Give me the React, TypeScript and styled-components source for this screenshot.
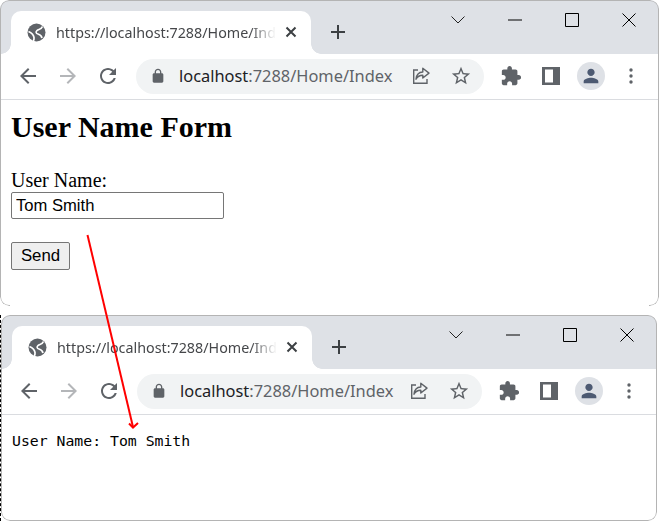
import React from "react";
import styled, { createGlobalStyle } from "styled-components";

const Global = createGlobalStyle`
  html, body { margin: 0; padding: 0; background: #fff; }
  * { box-sizing: border-box; }
`;

const Page = styled.div`
  position: relative;
  width: 659px;
  height: 521px;
  overflow: hidden;
  display: flex;
  flex-direction: column;
  gap: 9px;
  background: #fff;
`;

const LowerRow = styled.div`
  flex: 1;
  width: 657px;
  border-left: 1px dashed #000;
  display: flex;
`;

const Window = styled.section<{ $height: number; $closed?: boolean }>`
  position: relative;
  width: 100%;
  height: ${(p) => p.$height}px;
  overflow: hidden;
  border-radius: 9px;
  display: flex;
  flex-direction: column;
  background: #fff;
  &::after {
    content: "";
    position: absolute;
    inset: 0;
    border: 1px solid #b4b4b4;
    border-radius: 9px;
    pointer-events: none;
    ${(p) =>
      p.$closed
        ? ""
        : `
      -webkit-mask:
        linear-gradient(#000 0 0) top / 100% calc(100% - 1px) no-repeat,
        linear-gradient(to right, #000 10px, transparent 10px, transparent calc(100% - 10px), #000 calc(100% - 10px)) bottom / 100% 1px no-repeat;
      mask:
        linear-gradient(#000 0 0) top / 100% calc(100% - 1px) no-repeat,
        linear-gradient(to right, #000 10px, transparent 10px, transparent calc(100% - 10px), #000 calc(100% - 10px)) bottom / 100% 1px no-repeat;
    `}
  }
`;

const TabStrip = styled.div`
  height: 54px;
  flex: none;
  display: flex;
  align-items: flex-start;
  background: #dee1e6;
`;

const Tab = styled.div`
  position: relative;
  width: 300px;
  height: 43px;
  margin: 11px 0 0 11px;
  padding: 0 14px 1px 16px;
  display: flex;
  align-items: center;
  background: #fff;
  border-radius: 10px 10px 0 0;
  &::before,
  &::after {
    content: "";
    position: absolute;
    bottom: 0;
    width: 10px;
    height: 10px;
  }
  &::before {
    left: -10px;
    background: radial-gradient(circle at 0 0, transparent 9.5px, #fff 10px);
  }
  &::after {
    right: -10px;
    background: radial-gradient(circle at 100% 0, transparent 9.5px, #fff 10px);
  }
`;

const TabTitle = styled.span`
  flex: 1;
  min-width: 0;
  margin: 1px 9px 0 10px;
  overflow: hidden;
  white-space: nowrap;
  font: 14.3px/20px "Noto Sans", "Open Sans", sans-serif;
  color: #45474a;
  -webkit-mask-image: linear-gradient(to right, #000 88%, transparent 100%);
  mask-image: linear-gradient(to right, #000 88%, transparent 100%);
`;

const PlusSlot = styled.div`
  width: 20px;
  height: 20px;
  margin: 22px 0 0 17px;
  display: flex;
`;

const Controls = styled.div`
  margin-left: auto;
  padding: 10px 2px 0 0;
  display: flex;
  align-items: center;
`;

const ControlSlot = styled.div<{ $width: number }>`
  width: ${(p) => p.$width}px;
  height: 20px;
  display: flex;
  align-items: center;
  justify-content: center;
`;

const Toolbar = styled.div`
  height: 46px;
  flex: none;
  padding: 5px 8px 6px;
  display: flex;
  align-items: center;
  background: #fff;
  border-bottom: 1px solid #dadce0;
`;

const IconSlot = styled.div`
  width: 40px;
  height: 35px;
  flex: none;
  display: flex;
  align-items: center;
  justify-content: center;
`;

const Omnibox = styled.div`
  flex: 1;
  min-width: 0;
  height: 35px;
  margin: 0 7px 0 8px;
  padding: 0 4px 0 14px;
  display: flex;
  align-items: center;
  background: #f1f3f4;
  border-radius: 18px;
`;

const OmniIcon = styled.div<{ $width: number }>`
  width: ${(p) => p.$width}px;
  height: 35px;
  flex: none;
  display: flex;
  align-items: center;
  justify-content: center;
`;

const Url = styled.div`
  flex: 1;
  margin-left: 13px;
  white-space: nowrap;
  font: 16.4px/24px "Noto Sans", "Open Sans", sans-serif;
  color: #5f6368;
`;

const Host = styled.span`
  color: #202124;
`;

const Avatar = styled.div`
  width: 28px;
  height: 28px;
  border-radius: 50%;
  background: #dee1e6;
  display: flex;
  align-items: center;
  justify-content: center;
`;

const FormBody = styled.main`
  flex: 1;
  padding: 9px 11px 0;
  font: 20px/23px "Liberation Serif", serif;
  color: #000;
`;

const Title = styled.h1`
  margin: 0 0 25px;
  font: bold 30px/35px "Liberation Serif", serif;
`;

const FieldLabel = styled.label`
  display: block;
`;

const TextInput = styled.input`
  display: block;
  width: 213px;
  height: 27px;
  margin: 0 0 23px;
  padding: 0 4px;
  border: 1px solid #767676;
  border-radius: 2px;
  background: #fff;
  color: #000;
  font: 16.6px "Liberation Sans", Arial, sans-serif;
  outline: none;
`;

const SendButton = styled.button`
  display: block;
  width: 59px;
  height: 28px;
  padding: 0;
  border: 1px solid #767676;
  border-radius: 2px;
  background: #efefef;
  color: #000;
  font: 16.8px "Liberation Sans", Arial, sans-serif;
`;

const ResultBody = styled.main`
  flex: 1;
  padding: 16px 11px 0;
  font: 14.8px/19px "DejaVu Sans Mono", monospace;
  color: #000;
  white-space: pre;
`;

const ArrowOverlay = styled.svg`
  position: absolute;
  inset: 0;
  pointer-events: none;
`;

const gray = "#5f6368";

const Icon = ({ size, d, fill = gray }: { size: number; d: string; fill?: string }) => (
  <svg width={size} height={size} viewBox="0 0 24 24" fill={fill} aria-hidden="true">
    <path d={d} />
  </svg>
);

const paths = {
  back: "M20 11H7.830l5.590-5.590L12 4l-8 8 8 8 1.410-1.410L7.830 13H20v-2z",
  forward: "M4 11h12.170l-5.590-5.590L12 4l8 8-8 8-1.410-1.410L16.170 13H4v-2z",
  reload:
    "M17.650 6.350C16.200 4.900 14.210 4 12 4c-4.420 0-7.990 3.580-7.990 8s3.570 8 7.990 8c3.730 0 6.840-2.550 7.730-6h-2.080c-.82 2.330-3.040 4-5.650 4-3.310 0-6-2.690-6-6s2.690-6 6-6c1.660 0 3.140.69 4.220 1.780L13 11h7V4l-2.350 2.350z",
  lock:
    "M18 8h-1V6c0-2.760-2.240-5-5-5S7 3.240 7 6v2H6c-1.100 0-2 .9-2 2v10c0 1.100.9 2 2 2h12c1.100 0 2-.9 2-2V10c0-1.100-.9-2-2-2zM9 6c0-1.660 1.340-3 3-3s3 1.340 3 3v2H9V6z",
  star:
    "M22 9.240l-7.190-.62L12 2 9.190 8.630 2 9.240l5.460 4.730L5.820 21 12 17.270 18.180 21l-1.630-7.030L22 9.240zM12 15.400l-3.760 2.270 1-4.280-3.320-2.880 4.380-.38L12 6.100l1.710 4.040 4.380.38-3.320 2.880 1 4.280L12 15.400z",
  puzzle:
    "M20.500 11H19V7c0-1.100-.9-2-2-2h-4V3.500C13 2.120 11.880 1 10.500 1S8 2.120 8 3.500V5H4c-1.100 0-1.990.9-1.990 2v3.800H3.500c1.490 0 2.700 1.210 2.700 2.700s-1.210 2.700-2.700 2.700H2V20c0 1.100.9 2 2 2h3.800v-1.500c0-1.490 1.210-2.700 2.700-2.700 1.490 0 2.700 1.210 2.700 2.700V22H17c1.100 0 2-.9 2-2v-4h1.500c1.380 0 2.500-1.120 2.500-2.500S21.880 11 20.500 11z",
  person:
    "M12 12c2.210 0 4-1.790 4-4s-1.790-4-4-4-4 1.790-4 4 1.790 4 4 4zm0 2c-2.670 0-8 1.340-8 4v2h16v-2c0-2.660-5.330-4-8-4z",
};

const GlobeIcon = () => (
  <svg width="19" height="19" viewBox="0 0 19 19" aria-hidden="true">
    <circle cx="9.500" cy="9.500" r="9" fill={gray} />
    <path d="M15.500 3.500C14 7 11.500 6 10 7.500S9 10.500 11 11s3.500 1.500 4 4" fill="none" stroke="#fff" strokeWidth="1.700" />
    <path d="M1.500 8.500C4 9.500 6.500 11.500 7 14.500c.2 1.500-.2 2.600-.6 3.500" fill="none" stroke="#fff" strokeWidth="1.700" />
  </svg>
);

const ShareIcon = () => (
  <svg width="20" height="20" viewBox="0 0 20 20" fill="none" stroke={gray} strokeWidth="1.400" aria-hidden="true">
    <path d="M7 4H2.700v13.300h13.300V13" />
    <path d="M11.800 2.200l6.200 4.900-6.200 4.900V9.200c-3.400 0-5.400 1.300-6.800 4 .4-4.200 2.800-7 6.800-7.200V2.200z" strokeLinejoin="round" />
  </svg>
);

const SidePanelIcon = () => (
  <svg width="18" height="18" viewBox="0 0 18 18" aria-hidden="true">
    <path fillRule="evenodd" fill={gray} d="M0 0h18v18H0zM3 2.500v13h8v-13z" />
  </svg>
);

const DotsIcon = () => (
  <svg width="4" height="16" viewBox="0 0 4 16" fill={gray} aria-hidden="true">
    <circle cx="2" cy="2" r="1.700" />
    <circle cx="2" cy="8" r="1.700" />
    <circle cx="2" cy="14" r="1.700" />
  </svg>
);

const CloseTabIcon = () => (
  <svg width="12" height="12" viewBox="0 0 12 12" stroke="#3c4043" strokeWidth="2" aria-hidden="true">
    <path d="M1.500 1.500l9 9M10.500 1.500l-9 9" />
  </svg>
);

const PlusIcon = () => (
  <svg width="20" height="20" viewBox="0 0 20 20" stroke="#3c4043" strokeWidth="2" aria-hidden="true">
    <path d="M10 3v14M3 10h14" />
  </svg>
);

const WinChevron = () => (
  <svg width="14" height="8" viewBox="0 0 14 8" fill="none" stroke="#222" strokeWidth="1" aria-hidden="true">
    <path d="M.5.5L7 7 13.500.5" />
  </svg>
);
const WinMin = () => (
  <svg width="14" height="2" viewBox="0 0 14 2" stroke="#000" strokeWidth="1" aria-hidden="true">
    <path d="M0 1h14" />
  </svg>
);
const WinMax = () => (
  <svg width="14" height="14" viewBox="0 0 14 14" fill="none" stroke="#000" strokeWidth="1" aria-hidden="true">
    <path d="M.5.5h13v13H.5z" />
  </svg>
);
const WinClose = () => (
  <svg width="14" height="14" viewBox="0 0 14 14" fill="none" stroke="#000" strokeWidth="1" aria-hidden="true">
    <path d="M.5.5l13 13M13.500.5l-13 13" />
  </svg>
);

const BrowserChrome = () => (
  <>
    <TabStrip>
      <Tab>
        <GlobeIcon />
        <TabTitle>https://localhost:7288/Home/Index</TabTitle>
        <CloseTabIcon />
      </Tab>
      <PlusSlot>
        <PlusIcon />
      </PlusSlot>
      <Controls>
        <ControlSlot $width={57}><WinChevron /></ControlSlot>
        <ControlSlot $width={57}><WinMin /></ControlSlot>
        <ControlSlot $width={57}><WinMax /></ControlSlot>
        <ControlSlot $width={57}><WinClose /></ControlSlot>
      </Controls>
    </TabStrip>
    <Toolbar>
      <IconSlot><Icon size={24} d={paths.back} /></IconSlot>
      <IconSlot><Icon size={24} d={paths.forward} fill="#b4b6b9" /></IconSlot>
      <IconSlot><Icon size={24} d={paths.reload} /></IconSlot>
      <Omnibox>
        <Icon size={16} d={paths.lock} />
        <Url><Host>localhost</Host>:7288/Home/Index</Url>
        <OmniIcon $width={42}><ShareIcon /></OmniIcon>
        <OmniIcon $width={38}><Icon size={22} d={paths.star} /></OmniIcon>
      </Omnibox>
      <IconSlot><Icon size={22} d={paths.puzzle} /></IconSlot>
      <IconSlot><SidePanelIcon /></IconSlot>
      <IconSlot>
        <Avatar><Icon size={22} d={paths.person} fill="#4d5a72" /></Avatar>
      </IconSlot>
      <IconSlot><DotsIcon /></IconSlot>
    </Toolbar>
  </>
);

export default function App() {
  return (
    <Page>
      <Global />
      <Window $height={306}>
        <BrowserChrome />
        <FormBody>
          <Title>User Name Form</Title>
          <FieldLabel htmlFor="user-name">User Name:</FieldLabel>
          <TextInput id="user-name" defaultValue="Tom Smith" />
          <SendButton type="button">Send</SendButton>
        </FormBody>
      </Window>
      <LowerRow>
        <Window $height={206} $closed>
          <BrowserChrome />
          <ResultBody>User Name: Tom Smith</ResultBody>
        </Window>
      </LowerRow>
      <ArrowOverlay width="659" height="521" viewBox="0 0 659 521" fill="none" stroke="#f00" strokeWidth="2">
        <path d="M87.500 235L133 427" />
        <path d="M129 423.500l4 4 5-4.500" />
      </ArrowOverlay>
    </Page>
  );
}
